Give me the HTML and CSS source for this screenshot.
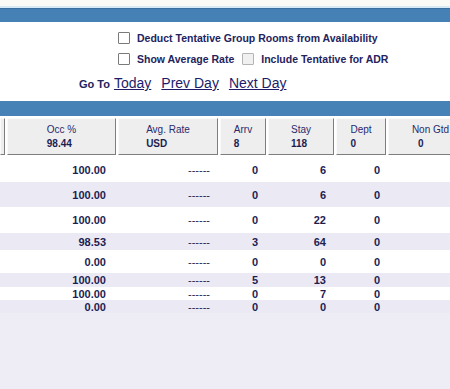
FILE: index.html
```html
<!DOCTYPE html>
<html>
<head>
<meta charset="utf-8">
<link rel="stylesheet" href="styles.css">
</head>
<body>
<div class="top-strip"></div>
<div class="bar"></div>
<div class="options">
  <div class="opt-row">
    <input type="checkbox" class="cb">
    <span class="lbl">Deduct Tentative Group Rooms from Availability</span>
  </div>
  <div class="opt-row">
    <input type="checkbox" class="cb">
    <span class="lbl">Show Average Rate</span>
    <input type="checkbox" class="cb" disabled>
    <span class="lbl">Include Tentative for ADR</span>
  </div>
  <div class="goto">
    <span class="goto-lbl">Go To</span>
    <a href="#">Today</a>
    <a href="#">Prev Day</a>
    <a href="#">Next Day</a>
  </div>
</div>
<div class="bar bar2"></div>
<div class="table">
  <div class="row head">
    <div class="hc"></div>
    <div class="hc"><div class="hin"><span class="hl">Occ %</span><span class="hv">98.44</span></div></div>
    <div class="hc"><div class="hin"><span class="hl">Avg. Rate</span><span class="hv">USD</span></div></div>
    <div class="hc"><div class="hin"><span class="hl">Arrv</span><span class="hv">8</span></div></div>
    <div class="hc"><div class="hin"><span class="hl">Stay</span><span class="hv">118</span></div></div>
    <div class="hc"><div class="hin"><span class="hl">Dept</span><span class="hv">0</span></div></div>
    <div class="hc"><div class="hin"><span class="hl">Non Gtd</span><span class="hv ng">0</span></div></div>
  </div>
  <div class="row r25"><div></div><div class="c1">100.00</div><div class="c2">------</div><div class="c3">0</div><div class="c4">6</div><div class="c5">0</div><div></div></div>
  <div class="row r25 alt"><div></div><div class="c1">100.00</div><div class="c2">------</div><div class="c3">0</div><div class="c4">6</div><div class="c5">0</div><div></div></div>
  <div class="row r26"><div></div><div class="c1">100.00</div><div class="c2">------</div><div class="c3">0</div><div class="c4">22</div><div class="c5">0</div><div></div></div>
  <div class="row r17 alt"><div></div><div class="c1">98.53</div><div class="c2">------</div><div class="c3">3</div><div class="c4">64</div><div class="c5">0</div><div></div></div>
  <div class="row r23"><div></div><div class="c1">0.00</div><div class="c2">------</div><div class="c3">0</div><div class="c4">0</div><div class="c5">0</div><div></div></div>
  <div class="row r14 alt"><div></div><div class="c1">100.00</div><div class="c2">------</div><div class="c3">5</div><div class="c4">13</div><div class="c5">0</div><div></div></div>
  <div class="row r13"><div></div><div class="c1">100.00</div><div class="c2">------</div><div class="c3">0</div><div class="c4">7</div><div class="c5">0</div><div></div></div>
  <div class="row r13 alt"><div></div><div class="c1">0.00</div><div class="c2">------</div><div class="c3">0</div><div class="c4">0</div><div class="c5">0</div><div></div></div>
</div>
</body>
</html>
```

FILE: styles.css
```css
html, body {
  margin: 0;
  padding: 0;
  height: 100%;
}
body {
  background: #eeedf5;
  font-family: "Liberation Sans", Arial, sans-serif;
  overflow: hidden;
  width: 450px;
}
.top-strip {
  height: 6px;
  background: #fbfaf7;
  border-bottom: 2px solid #d8ebf4;
}
.bar {
  height: 14px;
  background: #4681b5;
  border-top: 1px solid #3a6f9e;
  box-sizing: border-box;
}
.options {
  background: #ffffff;
  padding: 9px 0 10px 0;
}
.opt-row {
  display: flex;
  align-items: center;
  height: 13px;
  margin-left: 118px;
  margin-bottom: 8px;
}
.cb {
  appearance: none;
  -webkit-appearance: none;
  width: 12px;
  height: 12px;
  margin: 0 7px 0 0;
  border: 1px solid #7a7a7a;
  border-radius: 1px;
  background: #fff;
  box-sizing: border-box;
}
.cb:disabled {
  border-color: #b4b4b4;
  background: #f0f0f0;
  margin-left: 8px;
}
.lbl {
  font-size: 10.5px;
  font-weight: bold;
  color: #23235e;
  white-space: nowrap;
}
.goto {
  display: flex;
  align-items: baseline;
  height: 16px;
  margin-left: 79px;
  margin-top: 10px;
  gap: 10px;
}
.goto-lbl {
  font-size: 11px;
  font-weight: bold;
  color: #23235e;
  margin-right: -6px;
}
.goto a {
  font-size: 14px;
  color: #1c1c6a;
  text-decoration: underline;
  line-height: 16px;
}
.bar2 {
  height: 15px;
  border-top: none;
  background: #4682b6;
}
.table {
  width: 450px;
  overflow: hidden;
}
.row {
  display: grid;
  grid-template-columns: 5px 109px 100px 46px 66px 50px 85px;
  column-gap: 2px;
  background: #ffffff;
  font-size: 11px;
  font-weight: bold;
  color: #1d1d52;
  align-items: center;
}
.row.alt {
  background: #ebeaf4;
}
.row.head {
  padding-top: 2px;
  padding-bottom: 2px;
  align-items: stretch;
}
.hc {
  height: 37px;
  box-sizing: border-box;
  background: #eeeeee;
  border: 1px solid;
  border-color: #fafafa #7d7d7d #7d7d7d #fafafa;
  display: flex;
  align-items: center;
  justify-content: center;
}
.hin {
  display: flex;
  flex-direction: column;
  align-items: flex-start;
  line-height: 14px;
}
.hl {
  font-size: 10px;
  font-weight: normal;
  color: #2a2a6c;
  white-space: nowrap;
}
.hv {
  font-size: 10px;
  font-weight: bold;
  color: #1d1d52;
}
.hv.ng {
  margin-left: 6px;
}
.row > div:not(.hc) {
  text-align: right;
}
.c1 { padding-right: 10px; }
.c2 { padding-right: 8px; font-weight: normal; }
.c3 { padding-right: 8px; }
.c4 { padding-right: 8px; }
.c5 { padding-right: 6px; }
.r25 { height: 25px; }
.r26 { height: 26px; }
.r17 { height: 17px; }
.r23 { height: 23px; }
.r14 { height: 14px; }
.r13 { height: 13px; }
```
